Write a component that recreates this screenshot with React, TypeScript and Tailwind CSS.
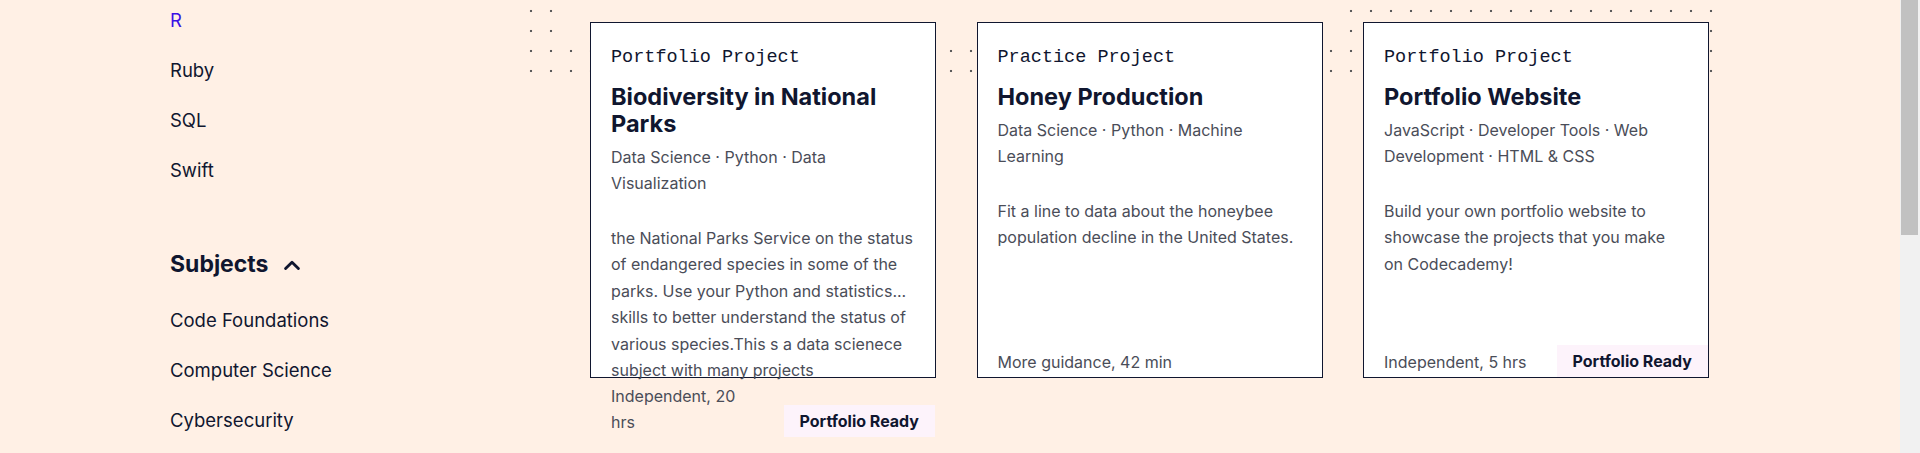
import React from 'react';

type Project = {
  kind: string;
  title: string;
  tags: string[];
  description: string;
  time: string;
  portfolioReady?: boolean;
};

const projects: Project[] = [
  {
    kind: 'Portfolio Project',
    title: 'Biodiversity in National Parks',
    tags: ['Data Science', 'Python', 'Data Visualization'],
    description:
      'the National Parks Service on the status of endangered species in some of the parks. Use your Python and statistics... skills to better understand the status of various species.This s a data scienece subject with many projects',
    time: 'Independent, 20 hrs',
    portfolioReady: true,
  },
  {
    kind: 'Practice Project',
    title: 'Honey Production',
    tags: ['Data Science', 'Python', 'Machine Learning'],
    description: 'Fit a line to data about the honeybee population decline in the United States.',
    time: 'More guidance, 42 min',
  },
  {
    kind: 'Portfolio Project',
    title: 'Portfolio Website',
    tags: ['JavaScript', 'Developer Tools', 'Web Development', 'HTML & CSS'],
    description: 'Build your own portfolio website to showcase the projects that you make on Codecademy!',
    time: 'Independent, 5 hrs',
    portfolioReady: true,
  },
];

const languages = ['R', 'Ruby', 'SQL', 'Swift'];
const subjects = ['Code Foundations', 'Computer Science', 'Cybersecurity'];

const ChevronUp = () => (
  <svg width="16" height="10" viewBox="0 0 16 10" fill="none" className="mt-[2px]">
    <path d="M1.6 8.6 8 2.2l6.4 6.4" stroke="#10162f" strokeWidth="2.8" strokeLinecap="round" strokeLinejoin="round" />
  </svg>
);

const ProjectCard = ({ project }: { project: Project }) => (
  <div className="flex h-[356px] w-[346px] flex-col border border-[#10162f] bg-white pl-5 pr-5 pt-[23px]">
    <p className="font-['Liberation_Mono',monospace] text-[18.5px] leading-[24px] text-[#10162f]">{project.kind}</p>
    <h3 className="mt-[13px] text-[23.5px] font-bold leading-[27px] text-[#10162f]">{project.title}</h3>
    <p className="mt-[7px] text-[16px] leading-[26px] text-[#4a4d58]">{project.tags.join(' · ')}</p>
    <p className="mt-[29px] text-[16px] leading-[26.4px] text-[#4a4d58]">{project.description}</p>
    <div className="-mr-5 mt-auto flex items-end justify-between">
      <span
        className={`mb-[2px] text-[16px] leading-[26px] text-[#4a4d58] ${project.portfolioReady ? 'max-w-[150px]' : ''}`}
      >
        {project.time}
      </span>
      {project.portfolioReady && (
        <span className="bg-[#fdf3fb] px-4 py-[3px] text-[16px] font-bold leading-[26px] text-[#10162f]">
          Portfolio Ready
        </span>
      )}
    </div>
  </div>
);

export default function App() {
  return (
    <div className="flex h-[453px] w-[1920px] overflow-hidden bg-[#fff0e5] font-['Inter','Noto_Sans',sans-serif]">
      <main className="flex flex-1">
        <aside className="w-[590px] shrink-0 pl-[170px] text-[#10162f]">
          <ul className="flex flex-col gap-[24px] pt-[7px] text-[18.5px] leading-[26px]">
            {languages.map((lang) => (
              <li key={lang} className={lang === 'R' ? 'text-[#3a10e5]' : ''}>
                {lang}
              </li>
            ))}
          </ul>
          <h2 className="mt-[65px] flex items-center gap-4 text-[23px] font-bold leading-[32px]">
            Subjects
            <ChevronUp />
          </h2>
          <ul className="mt-[27px] flex flex-col gap-[24px] text-[18.5px] leading-[26px]">
            {subjects.map((s) => (
              <li key={s}>{s}</li>
            ))}
          </ul>
        </aside>

        <section className="relative pt-[22px]">
          {/* dotted decoration behind the cards */}
          <div className="absolute left-[-69px] top-[1px] h-[40px] w-[40px] bg-[radial-gradient(circle,#5b5b5b_1px,transparent_1.6px)] bg-[length:20px_20px]" />
          <div className="absolute left-[-69px] top-[41px] h-[40px] w-[1200px] bg-[radial-gradient(circle,#5b5b5b_1px,transparent_1.6px)] bg-[length:20px_20px]" />
          <div className="absolute left-[751px] top-[1px] h-[40px] w-[380px] bg-[radial-gradient(circle,#5b5b5b_1px,transparent_1.6px)] bg-[length:20px_20px]" />

          <div className="relative grid grid-cols-[346px_346px_346px] items-start gap-x-[40.5px]">
            {projects.map((p) => (
              <ProjectCard key={p.title} project={p} />
            ))}
          </div>
        </section>
      </main>

      <div className="w-[20px] shrink-0 bg-[#f1f1f1] pl-[1px]">
        <div className="h-[235px] w-[17px] bg-[#c1c1c1]" />
      </div>
    </div>
  );
}
